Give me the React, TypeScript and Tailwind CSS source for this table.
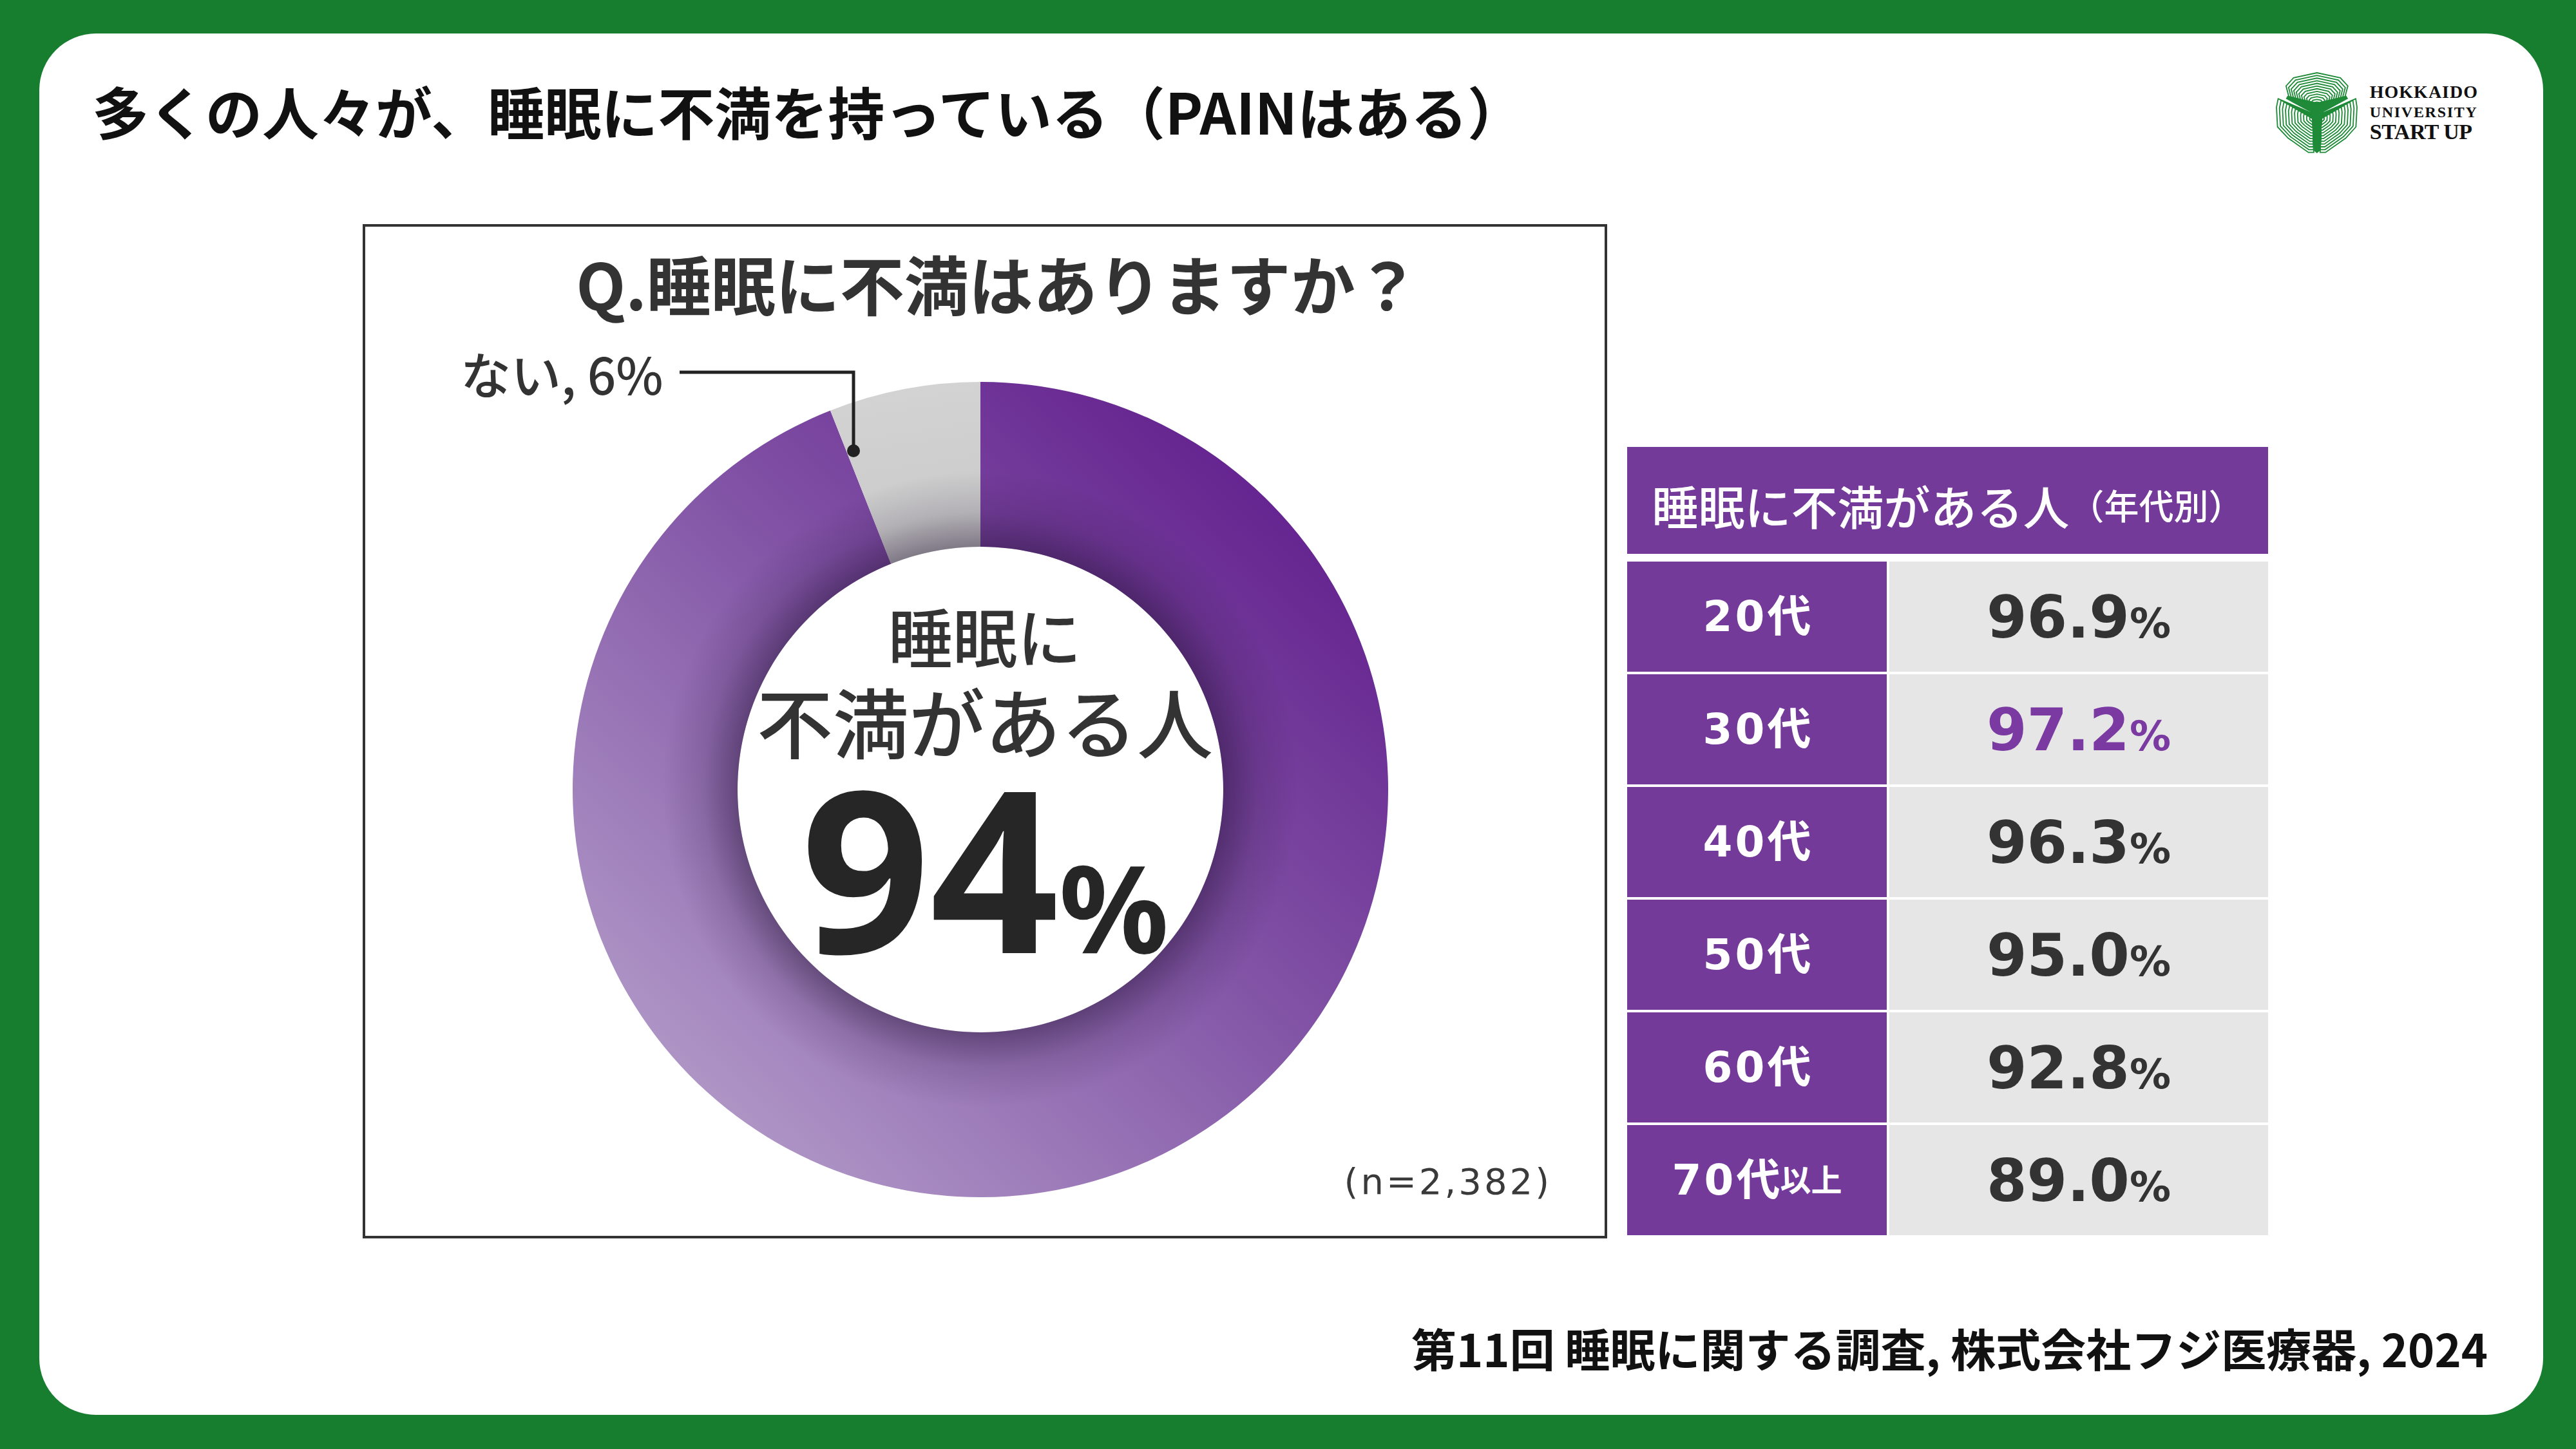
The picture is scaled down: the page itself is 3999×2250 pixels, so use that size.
import React from "react";

type Pt = [number, number];

const LOBES: { pts: Pt[]; f: Pt }[] = [
  {
    pts: [[85, 100], [120, 62], [230, 38], [340, 62], [375, 100], [362, 150], [230, 190], [98, 150]],
    f: [230, 188],
  },
  {
    pts: [[48, 160], [200, 225], [212, 260], [215, 412], [190, 412], [95, 345], [45, 292], [40, 200]],
    f: [210, 255],
  },
  {
    pts: [[412, 160], [262, 225], [250, 260], [245, 412], [270, 412], [365, 345], [413, 292], [418, 200]],
    f: [250, 255],
  },
];

function ringPolys(pts: Pt[], f: Pt, n: number): string[] {
  const out: string[] = [];
  for (let i = 0; i < n; i++) {
    const s = 1 - i / n;
    out.push(pts.map(([x, y]) => `${f[0] + (x - f[0]) * s},${f[1] + (y - f[1]) * s}`).join(" "));
  }
  return out;
}

function Logo() {
  return (
    <div className="flex items-center gap-[19px]">
      <svg width="127" height="127" viewBox="38 35 382 384">
        <polygon
          points="92,146 230,178 368,146 376,160 262,222 250,262 243,405 230,416 217,405 210,262 198,222 84,160"
          fill="#1f8b38"
        />
        {LOBES.map((l, li) =>
          ringPolys(l.pts, l.f, 12).map((p, i) => (
            <polygon key={`${li}-${i}`} points={p} fill="none" stroke="#1f8b38" strokeWidth={5.5} strokeLinejoin="miter" />
          ))
        )}
      </svg>
      <div className="flex flex-col font-['Liberation_Serif',serif] font-bold text-[#111]">
        <div className="text-[28px] leading-none tracking-[1px]">HOKKAIDO</div>
        <div className="mt-[5px] text-[24px] leading-none tracking-[1.7px]">UNIVERSITY</div>
        <div className="mt-[2px] text-[34px] leading-none tracking-[-0.5px]">START UP</div>
      </div>
    </div>
  );
}

function Donut() {
  const cx = 955;
  const cy = 737;
  const R = 633;
  const r = 377;
  const a = (-21.6 * Math.PI) / 180;
  const ox = cx + R * Math.sin(a);
  const oy = cy - R * Math.cos(a);
  const ix = cx + r * Math.sin(a);
  const iy = cy - r * Math.cos(a);
  const purple = `M ${cx} ${cy - R} A ${R} ${R} 0 1 1 ${ox} ${oy} L ${ix} ${iy} A ${r} ${r} 0 1 0 ${cx} ${cy - r} Z`;
  const gray = `M ${ox} ${oy} A ${R} ${R} 0 0 1 ${cx} ${cy - R} L ${cx} ${cy - r} A ${r} ${r} 0 0 0 ${ix} ${iy} Z`;
  const ring = `M ${cx} ${cy - R} A ${R} ${R} 0 1 1 ${cx - 0.01} ${cy - R} Z M ${cx} ${cy - r} A ${r} ${r} 0 1 0 ${cx + 0.01} ${cy - r} Z`;
  return (
    <svg width="1926" height="1430" viewBox="0 0 1926 1430" className="block">
      <defs>
        <linearGradient id="pg" gradientUnits="userSpaceOnUse" x1="1430" y1="230" x2="470" y2="1260">
          <stop offset="0" stopColor="#63208e" />
          <stop offset="0.45" stopColor="#8254a6" />
          <stop offset="1" stopColor="#b39cc9" />
        </linearGradient>
        <linearGradient id="gg" gradientUnits="userSpaceOnUse" x1="830" y1="110" x2="870" y2="380">
          <stop offset="0" stopColor="#d3d3d3" />
          <stop offset="1" stopColor="#c9c9c9" />
        </linearGradient>
        <radialGradient id="sh" gradientUnits="userSpaceOnUse" cx={cx} cy={cy} r={R}>
          <stop offset="0.595" stopColor="#1a0a2a" stopOpacity="0.42" />
          <stop offset="0.68" stopColor="#1a0a2a" stopOpacity="0.14" />
          <stop offset="0.78" stopColor="#1a0a2a" stopOpacity="0" />
          <stop offset="1" stopColor="#1a0a2a" stopOpacity="0" />
        </radialGradient>
      </defs>
      <path d={purple} fill="url(#pg)" />
      <path d={gray} fill="url(#gg)" />
      <path d={ring} fill="url(#sh)" fillRule="evenodd" />
      <polyline points="488,89 758,89 758,211" fill="none" stroke="#222" strokeWidth={5} />
      <circle cx={758} cy={211} r={10} fill="#222" />
    </svg>
  );
}

const ROWS: { age: string; suffix?: string; value: string; highlight?: boolean }[] = [
  { age: "20代", value: "96.9" },
  { age: "30代", value: "97.2", highlight: true },
  { age: "40代", value: "96.3" },
  { age: "50代", value: "95.0" },
  { age: "60代", value: "92.8" },
  { age: "70代", suffix: "以上", value: "89.0" },
];

function AgeTable() {
  return (
    <div className="mb-[5px] flex w-[995px] flex-col">
      <div className="flex h-[166px] items-center justify-center bg-[#733a9a] pt-[14px] font-['Noto_Sans_CJK_JP',sans-serif] font-medium text-white">
        <span className="text-[72px] leading-none">睡眠に不満がある人</span>
        <span className="text-[54px] leading-none">（年代別）</span>
      </div>
      <div className="mt-[12px] flex flex-col gap-[4px]">
        {ROWS.map((row) => (
          <div key={row.age} className="flex h-[171px] gap-[4px]">
            <div className="flex w-[403px] items-center justify-center bg-[#733a9a] font-['DejaVu_Sans','Noto_Sans_CJK_JP',sans-serif] font-bold text-white">
              <span className="text-[66px] leading-none tracking-[4px]">{row.age.slice(0, 2)}</span>
              <span className="text-[68px] leading-none">{row.age.slice(2)}</span>
              {row.suffix && <span className="text-[48px] leading-none">{row.suffix}</span>}
            </div>
            <div
              className={`flex flex-1 items-baseline justify-center bg-[#e6e6e6] pt-[12px] font-['DejaVu_Sans',sans-serif] font-bold ${
                row.highlight ? "text-[#7a3aa2]" : "text-[#333]"
              }`}
            >
              <span className="text-[90px] leading-[150px]">{row.value}</span>
              <span className="text-[64px] leading-[150px]">%</span>
            </div>
          </div>
        ))}
      </div>
    </div>
  );
}

function ChartBox() {
  return (
    <div className="flex h-[1575px] w-[1932px] flex-col items-center border-[4px] border-[#333] bg-white">
      <div className="ml-[40px] mt-[37px] font-['Noto_Sans_CJK_JP',sans-serif] text-[100px] font-bold leading-none text-[#333]">
        Q.睡眠に不満はありますか？
      </div>
      <div className="relative w-full flex-1">
        <Donut />
        <div className="absolute left-[148px] top-[51px] font-['Noto_Sans_CJK_JP',sans-serif] text-[78px] font-medium leading-none text-[#333]">
          ない, 6%
        </div>
        <div className="absolute inset-x-0 top-[447px] flex flex-col items-center text-[#333]">
          <div className="font-['Noto_Sans_CJK_JP',sans-serif] text-[100px] font-medium leading-none">睡眠に</div>
          <div className="mt-[23px] font-['Noto_Sans_CJK_JP',sans-serif] text-[118px] font-medium leading-none">不満がある人</div>
          <div className="flex items-baseline font-['Noto_Sans',sans-serif] font-bold leading-[336px] text-[#262626]">
            <span className="text-[350px] leading-[336px]">94</span>
            <span className="text-[189px] leading-[189px]">%</span>
          </div>
        </div>
        <div className="absolute right-[82px] top-[1318px] font-['DejaVu_Sans',sans-serif] text-[56px] leading-none tracking-[4px] text-[#3a3a3a]">
          (n=2,382)
        </div>
      </div>
    </div>
  );
}

export default function App() {
  return (
    <div className="h-[2250px] w-[3999px] bg-[#177e30] pb-[53px] pl-[61px] pr-[51px] pt-[52px]">
      <div className="flex h-full w-full flex-col rounded-[88px] bg-white">
        <div className="flex h-[296px] items-start justify-between">
          <div className="ml-[82px] mt-[75px] font-['Noto_Sans_CJK_JP',sans-serif] text-[88px] font-bold leading-none text-[#111]">
            多くの人々が、睡眠に不満を持っている（PAINはある）
          </div>
          <div className="mr-[101px] mt-[60px]">
            <Logo />
          </div>
        </div>
        <div className="flex items-end gap-[31px] pl-[502px]">
          <ChartBox />
          <AgeTable />
        </div>
        <div className="mt-[135px] flex justify-end pr-[86px]">
          <div className="font-['Noto_Sans_CJK_JP',sans-serif] text-[70px] font-bold leading-none text-[#111]">
            第11回 睡眠に関する調査, 株式会社フジ医療器, 2024
          </div>
        </div>
      </div>
    </div>
  );
}
